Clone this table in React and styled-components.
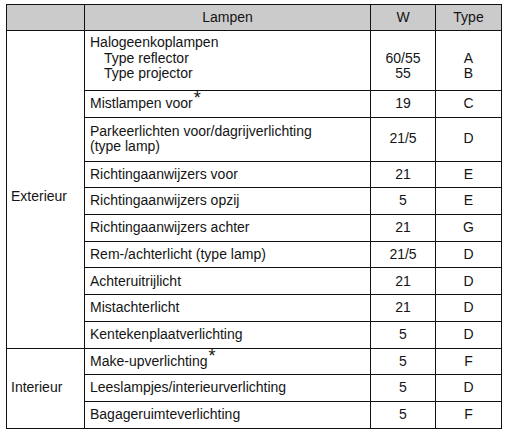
import React from "react";
import styled, { createGlobalStyle } from "styled-components";

const Global = createGlobalStyle`
  html, body { margin: 0; padding: 0; background: #fff; }
  body { font-family: "Liberation Sans", Arial, sans-serif; }
`;

const Page = styled.div`
  padding: 4px 0 0 6px;
`;

const Table = styled.table`
  border-collapse: collapse;
  table-layout: fixed;
  width: 496px;
  font-family: "Liberation Sans", Arial, sans-serif;
  font-size: 14px;
  line-height: 15.5px;
  color: #141414;
  td, th { border: 1px solid #111; padding: 0; box-sizing: border-box; }
`;

const Head = styled.th`
  background: #cbcbcb;
  font-weight: normal;
  text-align: center;
  height: 26px;
  vertical-align: middle;
`;

const Group = styled.td`
  vertical-align: middle;
  padding: ${(p) => p.$shift || 0}px 0 0 4px !important;
`;

const Name = styled.td`
  text-align: left;
  vertical-align: ${(p) => (p.$top ? "top" : "middle")};
  padding: ${(p) => (p.$top ? "4px 4px 0 5px" : "0 4px 0 5px")} !important;
  height: ${(p) => p.$h}px;
`;

const Value = styled.td`
  text-align: center;
  vertical-align: ${(p) => (p.$top ? "top" : "middle")};
  padding-top: ${(p) => (p.$top ? 4 : 0)}px !important;
`;

const Indent = styled.div`
  padding-left: 14px;
`;

const Star = styled.span`
  display: inline-block;
  font-size: 18px;
  line-height: 0;
  position: relative;
  top: -4px;
  margin-left: 1px;
`;

const exterior = [
  { name: <>Mistlampen voor<Star>*</Star></>, w: "19", t: "C" },
  { name: <>Parkeerlichten voor/dagrijverlichting<br />(type lamp)</>, w: "21/5", t: "D", h: 44 },
  { name: "Richtingaanwijzers voor", w: "21", t: "E" },
  { name: "Richtingaanwijzers opzij", w: "5", t: "E" },
  { name: "Richtingaanwijzers achter", w: "21", t: "G" },
  { name: "Rem-/achterlicht (type lamp)", w: "21/5", t: "D" },
  { name: "Achteruitrijlicht", w: "21", t: "D" },
  { name: "Mistachterlicht", w: "21", t: "D" },
  { name: "Kentekenplaatverlichting", w: "5", t: "D" },
];

const interior = [
  { name: <>Make-upverlichting<Star>*</Star></>, w: "5", t: "F" },
  { name: "Leeslampjes/interieurverlichting", w: "5", t: "D" },
  { name: "Bagageruimteverlichting", w: "5", t: "F" },
];

export default function App() {
  return (
    <Page>
      <Global />
      <Table>
        <colgroup>
          <col style={{ width: 78 }} />
          <col style={{ width: 286 }} />
          <col style={{ width: 65 }} />
          <col style={{ width: 66 }} />
        </colgroup>
        <thead>
          <tr>
            <Head />
            <Head>Lampen</Head>
            <Head>W</Head>
            <Head>Type</Head>
          </tr>
        </thead>
        <tbody>
          <tr>
            <Group rowSpan={10} $shift={14}>Exterieur</Group>
            <Name $top $h={60}>
              Halogeenkoplampen
              <Indent>Type reflector</Indent>
              <Indent>Type projector</Indent>
            </Name>
            <Value $top>
              <div>&nbsp;</div>
              <div>60/55</div>
              <div>55</div>
            </Value>
            <Value $top>
              <div>&nbsp;</div>
              <div>A</div>
              <div>B</div>
            </Value>
          </tr>
          {exterior.map((r, i) => (
            <tr key={i}>
              <Name $h={r.h || 26.7}>{r.name}</Name>
              <Value>{r.w}</Value>
              <Value>{r.t}</Value>
            </tr>
          ))}
          {interior.map((r, i) => (
            <tr key={"i" + i}>
              {i === 0 && <Group rowSpan={3}>Interieur</Group>}
              <Name $h={26.7}>{r.name}</Name>
              <Value>{r.w}</Value>
              <Value>{r.t}</Value>
            </tr>
          ))}
        </tbody>
      </Table>
    </Page>
  );
}
